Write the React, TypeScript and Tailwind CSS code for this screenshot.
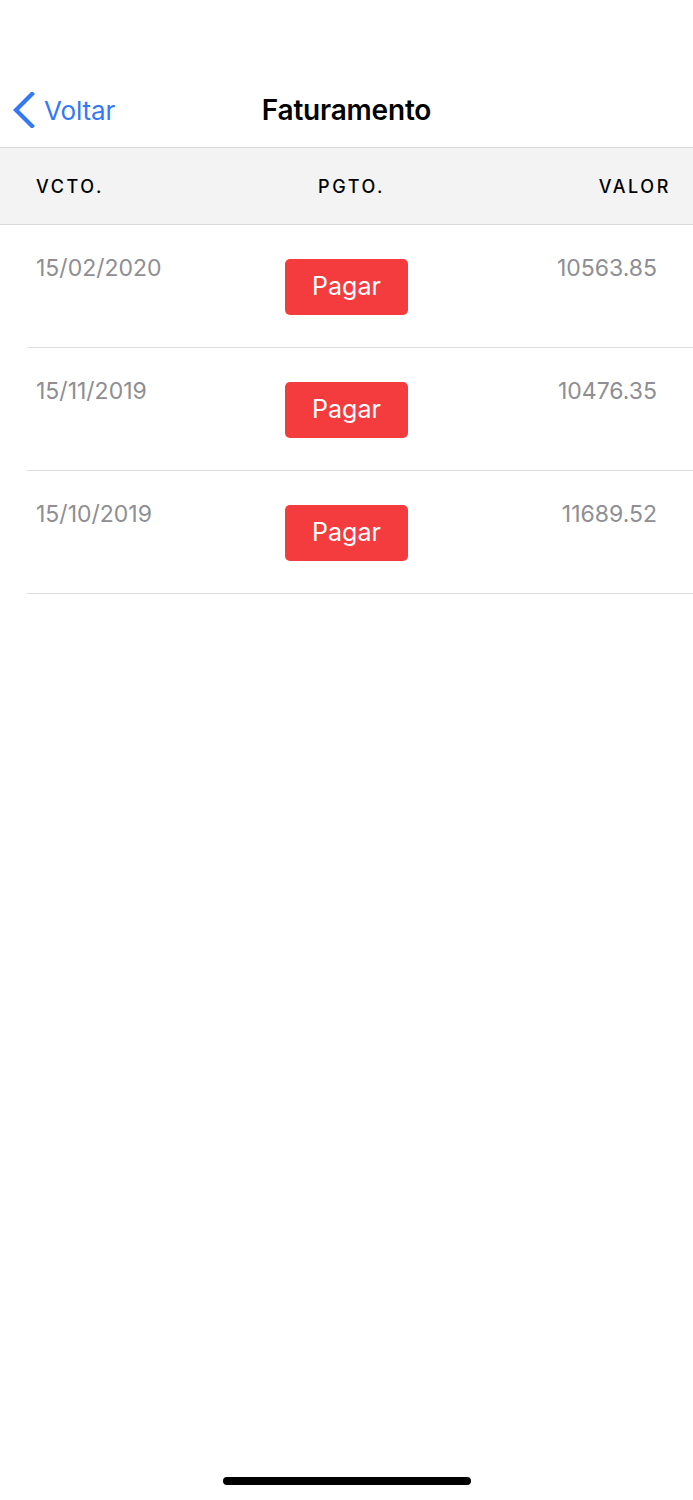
import React from 'react';

interface Invoice {
  due: string;
  amount: string;
}

const invoices: Invoice[] = [
  { due: '15/02/2020', amount: '10563.85' },
  { due: '15/11/2019', amount: '10476.35' },
  { due: '15/10/2019', amount: '11689.52' },
];

const BackChevron = () => (
  <svg width="24" height="36" viewBox="0 0 24 36" fill="none">
    <path d="M20 2 L4 18 L20 34" stroke="#3478f6" strokeWidth="4.2" strokeLinecap="square" strokeLinejoin="miter" />
  </svg>
);

const App: React.FC = () => {
  return (
    <div className="min-h-[1500px] w-full bg-white relative font-['Inter',sans-serif]">
      {/* Navigation bar */}
      <div className="h-[147px] pt-[87px]">
        <div className="relative h-[46px] flex items-center justify-center">
          <div className="absolute left-[12px] top-0 h-full flex items-center gap-[8px]">
            <BackChevron />
            <span className="text-[26px] text-[#3478f6] tracking-[-0.1px]">Voltar</span>
          </div>
          <h1 className="text-[28px] font-semibold text-black tracking-[-0.2px]">Faturamento</h1>
        </div>
      </div>

      {/* Table header */}
      <div className="h-[78px] bg-[#f3f3f3] border-y border-[#d9d9d9] flex items-center text-[18px] font-medium text-black tracking-[2.6px]">
        <div className="w-[318px] pl-[36px]">VCTO.</div>
        <div className="flex-1">PGTO.</div>
        <div className="pr-[22px]">VALOR</div>
      </div>

      {/* Rows */}
      <div className="pl-[27px]">
        {invoices.map((inv) => (
          <div key={inv.due} className="h-[123px] border-b border-[#dedede] flex items-start pl-[9px] pr-[36px]">
            <div className="w-[249px] pt-[26px] text-[23px] text-[#8e8e93]">{inv.due}</div>
            <div className="w-[123px] pt-[34px]">
              <button className="w-[123px] h-[56px] rounded-[5px] bg-[#f43b3d] text-white text-[25px]">
                Pagar
              </button>
            </div>
            <div className="flex-1 pt-[26px] text-right text-[23px] text-[#8e8e93]">{inv.amount}</div>
          </div>
        ))}
      </div>

      {/* Home indicator */}
      <div className="absolute left-0 right-0 top-[1477px] flex justify-center">
        <div className="w-[248px] h-[8px] rounded-full bg-black" />
      </div>
    </div>
  );
};

export default App;
